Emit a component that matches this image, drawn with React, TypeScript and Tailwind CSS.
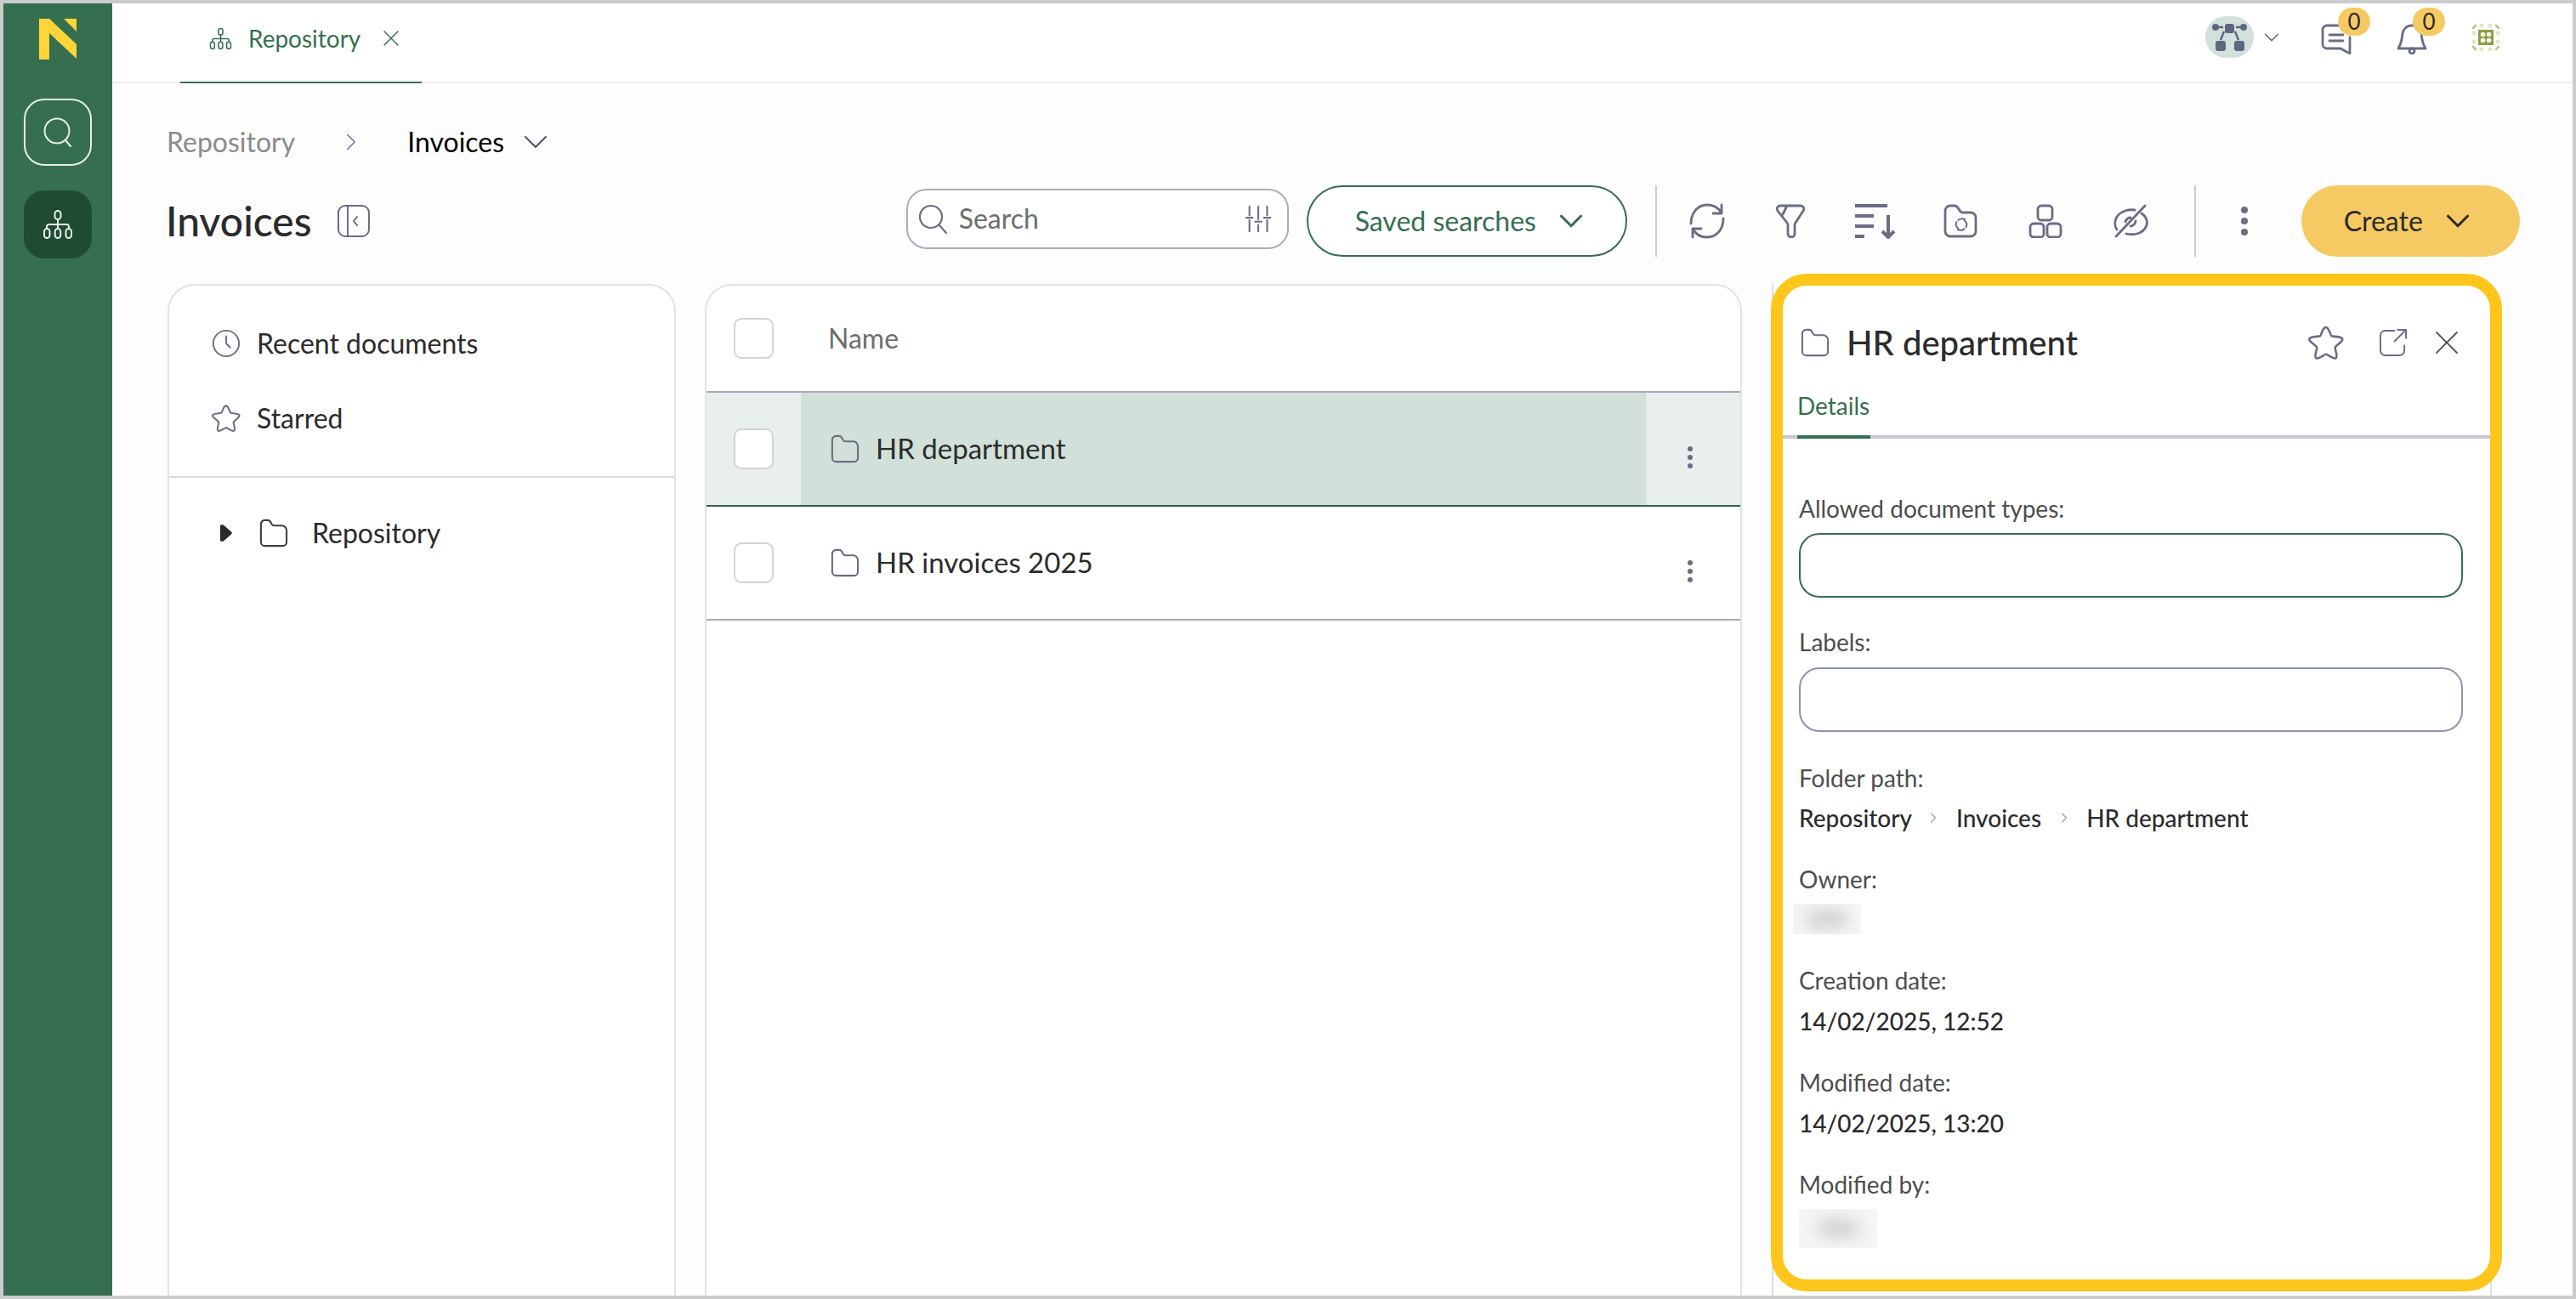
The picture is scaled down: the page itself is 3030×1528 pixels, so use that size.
import { ChevronDown, ChevronRight, X } from "lucide-react";

const green = "#356f50";

const Svg = ({ size, w, h, color = "#6a6d85", sw = 2.5, vb = "0 0 36 36", children }: any) => (
  <svg
    width={w ?? size}
    height={h ?? size}
    viewBox={vb}
    fill="none"
    stroke={color}
    strokeWidth={sw}
    strokeLinecap="round"
    strokeLinejoin="round"
    className="shrink-0"
  >
    {children}
  </svg>
);

const TreeIcon = ({ size, color }: any) => (
  <Svg size={size} color={color} sw={2}>
    <rect x="14.5" y="2" width="7" height="10" rx="3.5" />
    <path d="M18 12v6M5 23v-2.500a2.500 2.500 0 0 1 2.500-2.500h21a2.500 2.500 0 0 1 2.500 2.500V23M18 18v5" />
    <rect x="2" y="23" width="6.500" height="11" rx="3.250" />
    <rect x="14.750" y="23" width="6.500" height="11" rx="3.250" />
    <rect x="27.500" y="23" width="6.500" height="11" rx="3.250" />
  </Svg>
);

const FolderIcon = ({ size = 34, color = "#6a6d85" }: any) => (
  <Svg size={size} color={color} sw={2.2}>
    <path d="M2 7a5 5 0 0 1 5-5h3.500c2 0 3 1 4 3l1 2c.6 1.200 1.500 1.800 3 1.800H28a6 6 0 0 1 6 6V29a5 5 0 0 1-5 5H7a5 5 0 0 1-5-5z" />
  </Svg>
);

const StarIcon = ({ size = 34 }: any) => (
  <Svg size={size} sw={2.2}>
    <path d="M18 2.500c1.300 0 2.200 1.400 3.200 3.800l1.600 3.900c.4.900 1 1.400 2 1.500l4.300.4c3 .3 5.200 1 5.400 2.500.2 1.400-1.200 2.500-3.500 4.500l-3 2.600c-.7.600-1 1.400-.8 2.300l1 4.200c.6 2.600.9 4.600-.3 5.400-1.200.8-3 0-5.300-1.400l-3.400-2c-.9-.5-1.700-.5-2.500 0l-3.400 2c-2.300 1.400-4.100 2.200-5.300 1.400-1.200-.8-.9-2.800-.3-5.400l1-4.200c.2-.9-.1-1.700-.8-2.300l-3-2.600C2.200 17.100.8 16 1 14.600c.2-1.500 2.400-2.200 5.400-2.500l4.300-.4c1-.1 1.600-.6 2-1.500l1.600-3.900c1-2.400 1.900-3.800 3.700-3.800z" />
  </Svg>
);

const Dots = ({ gap = "gap-[4px]", dot = "size-[6px]" }: { gap?: string; dot?: string }) => (
  <div className={`flex flex-col items-center ${gap}`}>
    <span className={`${dot} rounded-full bg-[#6a6d85]`} />
    <span className={`${dot} rounded-full bg-[#6a6d85]`} />
    <span className={`${dot} rounded-full bg-[#6a6d85]`} />
  </div>
);

const Checkbox = () => (
  <div className="ml-[32px] h-[48px] w-[47px] shrink-0 rounded-[9px] border-2 border-[#d4d4d4] bg-white" />
);

const Field = ({ label, gap = "mt-[36px]", children }: any) => (
  <>
    <div className={`${gap} text-[28px] leading-[36px] text-[#4d4d4d]`}>{label}</div>
    {children}
  </>
);

const Value = ({ children }: any) => (
  <div className="mt-[12px] text-[28px] font-medium leading-[36px] text-[#2b2b2b]">{children}</div>
);

const Blurred = ({ width, height, left = 0 }: any) => (
  <div
    className="mt-[11px] flex items-center justify-center overflow-hidden bg-[#f6f6f6]"
    style={{ width, height, marginLeft: left }}
  >
    <div className="h-[18px] w-[50px] rounded-full bg-[#c8c8c8] blur-[10px]" />
  </div>
);

export default function App() {
  return (
    <div
      className="flex h-[1528px] w-[3030px] overflow-hidden border-4 border-[#cccccc] bg-[#fdfdfd] text-[#2b2b2b]"
      style={{ fontFamily: "Lato, 'Open Sans', sans-serif" }}
    >
      <aside className="flex w-[128px] shrink-0 flex-col items-center bg-[#356f50]">
        <svg width="44" height="48" viewBox="0 0 44 48" className="mt-[18px]" fill="#ffd53a">
          <path d="M0 0h12l32 30v17L12 17v31H0z" />
          <path d="M29 0h15v15z" />
        </svg>
        <div className="mt-[46px] flex h-[79px] w-[80px] items-center justify-center rounded-[24px] border-2 border-[#e6f0e4]">
          <Svg size={36} color="#e6f0e4" sw={2}>
            <circle cx="17" cy="16" r="14.500" />
            <path d="m27 27 6 7" />
          </Svg>
        </div>
        <div className="mt-[29px] flex h-[80px] w-[80px] items-center justify-center rounded-[24px] bg-[#1f4a33]">
          <TreeIcon size={36} color="#e6f0e4" />
        </div>
      </aside>

      <main className="flex min-w-0 flex-1 flex-col">
        <header className="flex h-[94px] shrink-0 items-stretch border-b-2 border-[#eeeeee] bg-white pl-[80px]">
          <div className="-mb-[2px] flex w-[284px] items-center border-b-2 border-[#356f50] pb-[10px] pl-[34px]">
            <TreeIcon size={27} color={green} />
            <span className="ml-[19px] text-[28px] text-[#356f50]">Repository</span>
            <X size={32} strokeWidth={1} color={green} className="ml-[20px]" />
          </div>
          <div className="ml-auto flex items-start pt-[5px]">
            <div className="mt-[10px] flex h-[49px] w-[57px] items-center justify-center rounded-full bg-[#d3e1dc]">
              <svg width="42" height="34" viewBox="0 0 42 34" fill="#5e6680" stroke="#5e6680">
                <rect x="15" y="1" width="11" height="11" rx="3" stroke="none" />
                <circle cx="4" cy="5" r="4" stroke="none" />
                <circle cx="37" cy="5" r="4" stroke="none" />
                <path d="M6 5h7M35 5h-7M14 10l-4 10M27 10l4 10" fill="none" strokeWidth="2.500" />
                <rect x="4" y="21" width="12" height="12" rx="3" stroke="none" />
                <rect x="26" y="21" width="12" height="12" rx="3" stroke="none" />
              </svg>
            </div>
            <ChevronDown size={30} strokeWidth={1.100} color="#5a5d73" className="ml-[6px] mt-[20px]" />
            <div className="relative ml-[43px] mt-[19px]">
              <Svg size={36} sw={2.8}>
                <path d="M24 2H7a5 5 0 0 0-5 5v17a5 5 0 0 0 5 5h16l11 6V16" />
                <path d="M10 13h16M10 20h16" />
              </Svg>
              <span className="absolute -top-[19px] left-[20px] flex h-[33px] w-[38px] items-center justify-center rounded-full bg-[#f6ca63] text-[26px] text-[#2b2b2b]">
                0
              </span>
            </div>
            <div className="relative ml-[53px] mt-[19px]">
              <Svg size={36} sw={2.8}>
                <path d="M2 29c3-5 4-8 4.500-14C7 7 11 2 18 2s11 5 11.500 13c.5 6 1.500 9 4.500 14z" />
                <circle cx="18" cy="32" r="3" />
              </Svg>
              <span className="absolute -top-[19px] left-[19px] flex h-[33px] w-[38px] items-center justify-center rounded-full bg-[#f6ca63] text-[26px] text-[#2b2b2b]">
                0
              </span>
            </div>
            <svg width="34" height="34" viewBox="0 0 34 34" className="ml-[52px] mr-[85px] mt-[18px]">
              <g fill="#e0e6c0">
                <circle cx="12" cy="3" r="2.500" />
                <circle cx="22" cy="3" r="2.500" />
                <circle cx="12" cy="31" r="2.500" />
                <circle cx="22" cy="31" r="2.500" />
                <circle cx="3" cy="12" r="2.500" />
                <circle cx="3" cy="22" r="2.500" />
                <circle cx="31" cy="12" r="2.500" />
                <circle cx="31" cy="22" r="2.500" />
              </g>
              <path d="M2 6l3-3M29 3l3 3M2 28l3 3M29 31l3-3" stroke="#b9c67f" strokeWidth="2.500" strokeLinecap="round" />
              <rect x="8" y="8" width="18" height="18" fill="#8f9a45" />
              <g fill="#f4f6e4">
                <circle cx="13.500" cy="13.500" r="2.800" />
                <circle cx="20.500" cy="13.500" r="2.800" />
                <circle cx="13.500" cy="20.500" r="2.800" />
                <circle cx="20.500" cy="20.500" r="2.800" />
              </g>
            </svg>
          </div>
        </header>

        <div className="ml-[64px] mt-[50px] flex h-[38px] shrink-0 items-center text-[32px]">
          <span className="text-[#8b8b8b]">Repository</span>
          <ChevronRight size={34} strokeWidth={1} color="#6a6d85" className="ml-[49px]" />
          <span className="ml-[49px] text-black">Invoices</span>
          <ChevronDown size={48} strokeWidth={1} color="#4f5168" className="ml-[13px]" />
        </div>

        <div className="ml-[63px] mt-[32px] flex h-[84px] shrink-0 items-center">
          <h1 className="text-[48px] font-medium text-[#2b2b2b]">Invoices</h1>
          <div className="ml-[29px]">
            <Svg w={40} h={40} color="#6a6d85" sw={2} vb="0 0 40 40">
              <rect x="2" y="2" width="36" height="36" rx="8" />
              <path d="M13 2v36M24 15l-4 5 4 5" />
            </Svg>
          </div>

          <div className="mb-[5px] ml-[630px] flex h-[71px] w-[450px] items-center rounded-[24px] border-2 border-[#a9abc0] bg-white pl-[12px] pr-[16px]">
            <Svg size={36} color="#6a6d85" sw={2.200}>
              <circle cx="15" cy="15" r="13" />
              <path d="m25 25 8 9" />
            </Svg>
            <span className="mb-[2px] ml-[12px] text-[32px] text-[#6e6e6e]">Search</span>
            <div className="ml-auto">
              <Svg size={34} color="#6a6d85" sw={2.200}>
                <path d="M6 2v11M6 19v14M17 2v16M17 25v8M28 2v11M28 19v14M2 16h8M13 21h8M24 16h8" />
              </Svg>
            </div>
          </div>
          <button className="ml-[21px] flex h-[84px] w-[377px] items-center justify-start rounded-[42px] border-2 border-[#356f50] bg-white pl-[55px] text-[32px] text-[#356f50]">
            Saved searches
            <ChevronDown size={46} strokeWidth={1.600} className="ml-[18px]" />
          </button>
          <div className="ml-[33px] h-[84px] w-[2px] bg-[#cccccc]" />

          <div className="ml-[37px]">
            <Svg w={44} h={42} vb="0 0 44 42" sw={2.800}>
              <path d="M39 12C36 6 30 2 22 2 12 2 3 10 3 24M39 2v10H29" />
              <path d="M5 30c3 6 9 10 17 10 10 0 19-8 19-22M5 40V30h10" />
            </Svg>
          </div>
          <div className="ml-[58px]">
            <Svg w={36} h={40} vb="0 0 36 40" sw={2.800}>
              <path d="M6 2h24c3 0 5 3 3 6l-9 14c-1 1-1 2-1 3v10c0 5-8 5-8 0V25c0-1 0-2-1-3L3 8C1 5 3 2 6 2zM14 2 9 12" />
            </Svg>
          </div>
          <div className="ml-[58px]">
            <svg width="48" height="42" viewBox="0 0 48 42" fill="none" stroke="#6a6d85" strokeWidth="4" className="shrink-0">
              <path d="M0 3h38M0 15h22M0 27h22M0 39h11M39 14v26M32 33l7 7 7-7" />
            </svg>
          </div>
          <div className="ml-[56px]">
            <Svg w={40} h={40} vb="0 0 40 40" sw={2.800}>
              <path d="M2 8a6 6 0 0 1 6-6h5c3 0 4 2 5 4s2 4 5 4h9a6 6 0 0 1 6 6v16a6 6 0 0 1-6 6H8a6 6 0 0 1-6-6z" />
              <path d="M25 18c-4-2-8 0-10 4-1 3 1 6 3 7M17 30c4 2 8 0 10-4 1-3-1-6-3-7" strokeDasharray="8 3" strokeWidth="2" />
            </Svg>
          </div>
          <div className="ml-[60px]">
            <Svg w={40} h={40} vb="0 0 40 40" sw={2.800}>
              <rect x="11" y="2" width="17" height="17" rx="4" />
              <rect x="2" y="23" width="16" height="16" rx="4" />
              <rect x="22" y="23" width="16" height="16" rx="4" />
            </Svg>
          </div>
          <div className="ml-[60px]">
            <Svg w={41} h={40} vb="0 0 41 40" sw={2.800}>
              <path d="M4 30C1 26 1 20 4 15 9 8 18 6 25 7M33 11c6 4 8 11 5 16-4 8-14 10-23 8M37 2 3 38" />
              <path d="M14 21c1-3 3-5 6-5M26 20c0 3-3 6-6 6" />
            </Svg>
          </div>
          <div className="ml-[54px] h-[84px] w-[2px] bg-[#cccccc]" />
          <div className="ml-[53px]">
            <Dots gap="gap-[5px]" dot="size-[8px]" />
          </div>
          <button className="ml-[63px] flex h-[84px] w-[257px] items-center justify-start rounded-[42px] bg-[#f6ca63] pl-[50px] text-[32px] text-[#2b2b2b]">
            Create
            <ChevronDown size={46} strokeWidth={1.600} className="ml-[18px]" />
          </button>
        </div>

        <div className="mt-[32px] flex min-h-0 flex-1 items-stretch pl-[65px]">
          <section className="w-[598px] shrink-0 rounded-t-[32px] border-x-2 border-t-2 border-[#e3e3e3] bg-white">
            <div className="h-[226px] border-b-2 border-[#dcdcdc] pl-[50px] pt-[50px] text-[32px]">
              <div className="flex h-[36px] items-center">
                <Svg size={34} sw={2}>
                  <circle cx="18" cy="18" r="16" />
                  <path d="M18 9v9l5 5" />
                </Svg>
                <span className="ml-[19px]">Recent documents</span>
              </div>
              <div className="mt-[52px] flex h-[36px] items-center">
                <StarIcon />
                <span className="ml-[19px]">Starred</span>
              </div>
            </div>
            <div className="mt-[45px] flex h-[40px] items-center pl-[60px] text-[32px]">
              <svg width="14" height="20" viewBox="0 0 14 20" fill="#2b2b2b" className="shrink-0">
                <path d="M2 0c1 0 2 .5 3 1.500l8 7c1 1 1 2 0 3l-8 7C4 19.500 3 20 2 20c-1.200 0-2-.8-2-2V2C0 .8.800 0 2 0z" />
              </svg>
              <span className="ml-[32px]">
                <FolderIcon color="#3c3d4a" />
              </span>
              <span className="ml-[28px]">Repository</span>
            </div>
          </section>

          <section className="ml-[34px] w-[1220px] shrink-0 rounded-t-[32px] border-x-2 border-t-2 border-[#e3e3e3] bg-white">
            <div className="flex h-[126px] items-center border-b-2 border-[#a6a9c0] text-[32px] text-[#6e6e6e]">
              <Checkbox />
              <span className="ml-[64px]">Name</span>
            </div>
            <div className="flex h-[134px] items-center border-b-2 border-[#2f5f47] bg-[#e9efec]">
              <Checkbox />
              <div className="ml-[32px] flex h-full w-[994px] items-center bg-[#d1e1d9] pl-[35px] text-[33px] text-[#2b2b2b]">
                <FolderIcon />
                <span className="ml-[19px]">HR department</span>
              </div>
              <div className="ml-[49px] mt-[20px]">
                <Dots />
              </div>
            </div>
            <div className="flex h-[134px] items-center border-b-2 border-[#a6a9c0]">
              <Checkbox />
              <div className="ml-[32px] flex w-[994px] items-center pl-[35px] text-[33px] text-[#2b2b2b]">
                <FolderIcon />
                <span className="ml-[19px]">HR invoices 2025</span>
              </div>
              <div className="ml-[49px] mt-[20px]">
                <Dots />
              </div>
            </div>
          </section>

          <section className="relative ml-[35px] w-[847px] shrink-0 border-x-2 border-[#dedede] bg-white">
            <div className="flex h-[94px] items-end pl-[32px] pr-[27px]">
              <div className="flex h-[50px] w-full items-center">
                <FolderIcon />
                <span className="ml-[20px] text-[40px] font-medium leading-none">HR department</span>
                <div className="ml-auto flex items-center">
                  <StarIcon size={42} />
                  <div className="ml-[40px]">
                    <Svg size={35} sw={2}>
                      <path d="M20 3H9a6 6 0 0 0-6 6v18a6 6 0 0 0 6 6h17a6 6 0 0 0 6-6v-6M20 16 33 3M24 2h10v10" />
                    </Svg>
                  </div>
                  <X size={48} strokeWidth={0.900} color="#4f5168" className="ml-[22px]" />
                </div>
              </div>
            </div>
            <div className="flex h-[88px] border-b-4 border-[#c5c7d3] pl-[28px]">
              <div className="-mb-[4px] w-[86px] border-b-4 border-[#356f50] pt-[31px] text-[28px] leading-[36px] text-[#356f50]">
                Details
              </div>
            </div>
            <div className="px-[30px] pt-[28px]">
              <Field label="Allowed document types:">
                <div className="mt-[11px] h-[76px] w-[781px] rounded-[24px] border-2 border-[#356f50]" />
              </Field>
              <Field label="Labels:" gap="mt-[34px]">
                <div className="mt-[12px] h-[76px] w-[781px] rounded-[24px] border-2 border-[#8d93ad]" />
              </Field>
              <Field label="Folder path:">
                <div className="mt-[11px] flex items-center text-[28px] font-medium leading-[36px] text-[#2b2b2b]">
                  Repository
                  <ChevronRight size={20} strokeWidth={1.200} color="#55586c" className="ml-[15px]" />
                  <span className="ml-[17px]">Invoices</span>
                  <ChevronRight size={20} strokeWidth={1.200} color="#55586c" className="ml-[17px]" />
                  <span className="ml-[16px]">HR department</span>
                </div>
              </Field>
              <Field label="Owner:">
                <Blurred width={80} height={36} left={-7} />
              </Field>
              <Field label="Creation date:">
                <Value>14/02/2025, 12:52</Value>
              </Field>
              <Field label="Modified date:">
                <Value>14/02/2025, 13:20</Value>
              </Field>
              <Field label="Modified by:">
                <Blurred width={92} height={46} />
              </Field>
            </div>
            <div className="absolute -left-[3px] -top-[12px] h-[1197px] w-[860px] rounded-[42px] border-[14px] border-[#fec51b]" />
          </section>
        </div>
      </main>
    </div>
  );
}
